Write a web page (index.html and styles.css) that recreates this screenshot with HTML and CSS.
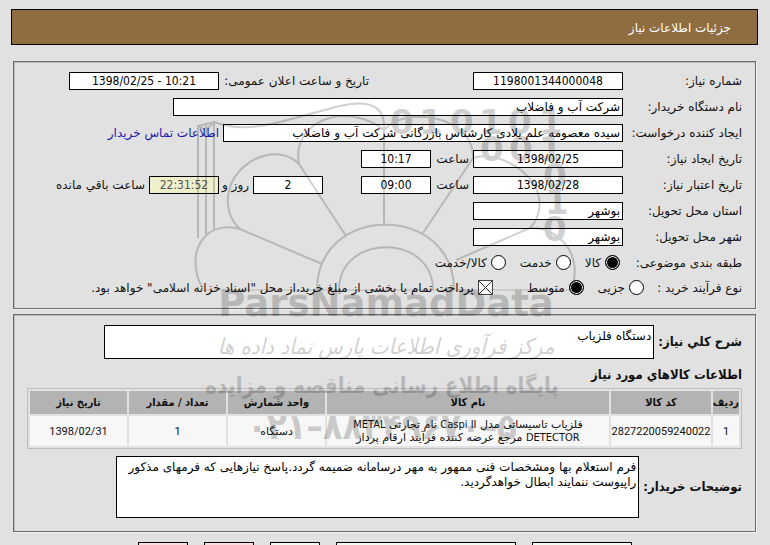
FILE: index.html
```html
<!DOCTYPE html>
<html lang="fa" dir="rtl">
<head>
<meta charset="utf-8">
<title>جزئیات اطلاعات نیاز</title>
<link rel="stylesheet" href="styles.css">
</head>
<body>
<header class="titlebar"><h1>جزئیات اطلاعات نیاز</h1></header>
<main>
  <section class="panel details">
    <div class="row">
      <label class="name" for="number">شماره نیاز:</label>
      <input class="box medium center" id="number" dir="ltr" value="1198001344000048" readonly>
      <label class="name public" for="public">تاریخ و ساعت اعلان عمومی:</label>
      <input class="box medium center" id="public" dir="ltr" value="1398/02/25 - 10:21" readonly>
    </div>
    <div class="row">
      <label class="name" for="org">نام دستگاه خریدار:</label>
      <input class="box widest" id="org" value="شرکت آب و فاضلاب" readonly>
    </div>
    <div class="row">
      <label class="name" for="creator">ایجاد کننده درخواست:</label>
      <input class="box wide" id="creator" value="سیده معصومه علم یلادی کارشناس بازرگانی شرکت آب و فاضلاب" readonly>
      <a class="contact" href="#contact">اطلاعات تماس خریدار</a>
    </div>
    <div class="row">
      <label class="name" for="created">تاریخ ایجاد نیاز:</label>
      <input class="box medium center" id="created" dir="ltr" value="1398/02/25" readonly>
      <label class="unit" for="created-time">ساعت</label>
      <input class="box small center" id="created-time" dir="ltr" value="10:17" readonly>
    </div>
    <div class="row">
      <label class="name" for="valid">تاریخ اعتبار نیاز:</label>
      <input class="box medium center" id="valid" dir="ltr" value="1398/02/28" readonly>
      <label class="unit" for="valid-time">ساعت</label>
      <input class="box small center" id="valid-time" dir="ltr" value="09:00" readonly>
      <input class="box small center days" id="days" dir="ltr" value="2" aria-label="روز" readonly>
      <label class="unit and" for="days">روز و</label>
      <input class="box small center timer" id="remain" dir="ltr" value="22:31:52" readonly>
      <label class="contact" for="remain">ساعت باقي مانده</label>
    </div>
    <div class="row">
      <label class="name" for="province">استان محل تحویل:</label>
      <input class="box medium" id="province" value="بوشهر" readonly>
    </div>
    <div class="row">
      <label class="name" for="city">شهر محل تحویل:</label>
      <input class="box medium" id="city" value="بوشهر" readonly>
    </div>
    <div class="row choices" role="radiogroup" aria-labelledby="category">
      <span class="name short" id="category">طبقه بندی موضوعی:</span>
      <label class="choice"><input type="radio" name="category" checked>کالا</label>
      <label class="choice"><input type="radio" name="category">خدمت</label>
      <label class="choice"><input type="radio" name="category">کالا/خدمت</label>
    </div>
    <div class="row choices" role="radiogroup" aria-labelledby="process">
      <span class="name shorter" id="process">نوع فرآیند خرید :</span>
      <label class="choice"><input type="radio" name="process">جزیی</label>
      <label class="choice"><input type="radio" name="process" checked>متوسط</label>
      <label class="choice payment"><input type="checkbox" checked>پرداخت تمام یا بخشی از مبلغ خرید،از محل "اسناد خزانه اسلامی" خواهد بود.</label>
    </div>
  </section>

  <section class="panel goods">
    <div class="area-row">
      <label for="summary">شرح کلي نیاز:</label>
      <textarea class="summary" id="summary" readonly>دستگاه فلزیاب</textarea>
    </div>
    <h2>اطلاعات کالاهاي مورد نیاز</h2>
    <table>
      <colgroup><col class="c-row"><col class="c-code"><col><col class="c-std"><col class="c-std"><col class="c-std"></colgroup>
      <thead>
        <tr><th>ردیف</th><th>کد کالا</th><th>نام کالا</th><th>واحد شمارش</th><th>تعداد / مقدار</th><th>تاریخ نیاز</th></tr>
      </thead>
      <tbody>
        <tr><td class="num">1</td><td class="num">2827220059240022</td><td>فلزیاب تاسیساتی مدل <span class="latin">Caspi II</span> نام تجارتی <span class="latin">METAL</span><br><span class="latin">DETECTOR</span> مرجع عرضه کننده فرآیند ارقام پرداز</td><td>دستگاه</td><td class="num">1</td><td class="num">1398/02/31</td></tr>
      </tbody>
    </table>
    <div class="area-row">
      <label for="notes">توضیحات خریدار:</label>
      <textarea class="notes" id="notes" readonly>فرم استعلام بها ومشخصات فنی ممهور به مهر درسامانه ضمیمه گردد.پاسخ نیازهایی که فرمهای مذکور راپیوست ننمایند ابطال خواهدگردید.</textarea>
    </div>
  </section>

  <div class="actions">
    <button class="b-mid" type="button"></button>
    <button class="b-long" type="button"></button>
    <button type="button"></button>
    <button class="pink" type="button"></button>
    <button class="pink" type="button"></button>
  </div>
</main>

<svg class="watermark" viewBox="190 90 390 360" aria-hidden="true">
  <g class="lines">
    <path d="M198 238V126L214 122V230M206 235V124M198 126L206 130L214 122C250 136 290 118 325 110C362 98 384 102 384 126V225"/>
    <path d="M203 289C192 270 194 250 203 239C211 228 226 225 240 229L322 264"/>
    <path d="M240 229C226 216 225 198 232 182C246 154 282 146 299 164L346 236"/>
    <path d="M299 164C294 138 313 118 342 116C360 116 374 122 384 130C394 120 406 116 425 117C453 119 474 136 473 158L423 233"/>
    <path d="M473 158C493 152 520 164 533 183C544 199 540 218 530 228L456 260"/>
    <path d="M530 228C547 227 563 237 571 253C577 269 575 281 570 289"/>
    <path d="M317 290C317 203 454 203 454 290M339 290C339 233 433 233 433 290"/>
    <path class="thin" d="M205 290H570"/>
  </g>
  <g class="digits">
    <text x="390" y="134">0</text><text x="419" y="134">1</text><text x="450" y="134">0</text><text x="479" y="134">1</text><text x="508" y="134">0</text><text x="539" y="134">1</text>
    <text x="480" y="161">0</text><text x="509" y="161">0</text><text x="539" y="161">1</text>
    <text x="543" y="188">0</text><text x="545" y="214">1</text><text x="543" y="241">0</text>
  </g>
  <text class="brand" x="386" y="316">ParsNamadData</text>
  <text class="script" x="386" y="354">مرکز فرآوری اطلاعات پارس نماد داده ها</text>
  <text class="slogan" x="382" y="393">پایگاه اطلاع رسانی مناقصه و مزایده</text>
  <text class="phone" x="382" y="439">۰۲۱–۸۸۳۴۹۶۷۰–۵</text>
</svg>
</body>
</html>
```
FILE: styles.css
```css
* { box-sizing: border-box; }
html { height: 100%; overflow: hidden; }
body {
  position: relative;
  height: 100%;
  margin: 0;
  padding: 9px 12px 0 11px;
  overflow: hidden;
  background: #e1e1e1;
  color: #111;
  font: 12px/16px "DejaVu Sans", sans-serif;
}
.titlebar {
  height: 36px;
  padding: 0 26px;
  border: 1px solid #000;
  background: #8f6d40;
  color: #fff;
}
h1 { margin: 0; font-size: 12px; font-weight: normal; line-height: 36px; }
main { padding: 0 2px; margin-top: 16px; }
.panel {
  border: 1px solid #6c6c6c;
  box-shadow: inset 1px 1px #bbb, 1px 1px #f2f2f2;
  padding: 0 13px;
}
.details { height: 248px; padding-top: 6px; }
.row { display: flex; align-items: center; height: 26px; white-space: nowrap; }
.name { flex: 0 0 119px; }
.short { flex-basis: 122px; }
.shorter { flex-basis: 98px; }
.public { flex-basis: 150px; margin-right: 104px; }
input, textarea {
  margin: 0;
  border: 1px solid #000;
  border-radius: 0;
  background: #fff;
  color: #000;
  font: inherit;
}
.box { height: 18px; padding: 0 2px; }
.small { width: 70px; }
.medium { width: 150px; }
.wide { width: 400px; }
.widest { width: 450px; }
.center { text-align: center; font-family: "DejaVu Sans Condensed", sans-serif; }
.unit { width: 42px; padding-right: 4px; }
.and { width: 34px; }
.days { margin-right: 38px; }
.timer { background: #f0efcb; color: #555; }
.contact { margin-right: 4px; }
a { color: #1a1aae; text-decoration: none; }
.choices { height: 25px; }
.choices .choice { display: flex; align-items: center; gap: 4px; margin-left: 14px; }
.choice input { appearance: none; width: 15px; height: 15px; }
.choice input[type="radio"] { border-radius: 50%; }
.choice input[type="radio"]:checked { background: #000; box-shadow: inset 0 0 0 1px #fff; }
.choice input[type="checkbox"] {
  background:
    linear-gradient(45deg, transparent 47%, #333 47%, #333 53%, transparent 53%),
    linear-gradient(-45deg, transparent 47%, #333 47%, #333 53%, transparent 53%), #fff;
  border-color: #444;
}
.choices .payment { margin-right: 20px; margin-left: 0; }
.goods { height: 218px; margin-top: 5px; padding-top: 10px; }
.area-row { display: flex; align-items: center; gap: 4px; }
.area-row label, h2 { font: bold 13px/16px "DejaVu Sans Condensed", sans-serif; }
textarea {
  resize: none;
  overflow: hidden;
  padding: 3px 2px;
  line-height: 15px;
}
.summary { width: 550px; height: 34px; }
.notes { width: 523px; height: 62px; }
h2 { margin: 8px 0 5px; }
table {
  width: 100%;
  margin-bottom: 7px;
  border: 1px solid #bdbdbd;
  border-spacing: 2px;
  table-layout: fixed;
  font-size: 11px;
  line-height: 13px;
  text-align: center;
}
.c-row { width: 26px; }
.c-code { width: 100px; }
.c-std { width: 97px; }
th, td { padding: 0; white-space: nowrap; }
th { height: 23px; background: #b3b3b3; font-family: "DejaVu Sans Condensed", sans-serif; }
td { height: 30px; background: #f7f7f7; }
.num { font-family: Roboto, sans-serif; }
.latin { font-family: "DejaVu Sans Condensed", sans-serif; }
.actions { display: flex; gap: 16px; margin-top: 10px; padding-right: 124px; }
button { width: 50px; height: 24px; padding: 0; border: 1px solid #000; background: #f2fbef; }
.b-mid { width: 100px; }
.b-long { width: 180px; }
.pink { background: #f9dcdc; }
.watermark {
  position: absolute;
  top: 90px;
  left: calc(50% - 195px);
  width: 390px;
  height: 360px;
  opacity: .18;
  pointer-events: none;
}
.lines { fill: none; stroke: #000; stroke-width: 2; }
.lines .thin { stroke-width: 1; }
.watermark text { text-anchor: middle; }
.watermark .digits text { direction: ltr; text-anchor: start; font: bold 34px "DejaVu Sans"; }
.watermark .brand { direction: ltr; font: bold 37px "DejaVu Sans"; }
.watermark .script { font: italic 22px "DejaVu Sans Condensed"; }
.watermark .slogan { font: bold 22px "DejaVu Sans Condensed"; }
.watermark .phone { direction: ltr; unicode-bidi: bidi-override; font: bold 36px "DejaVu Sans Condensed"; }
```
